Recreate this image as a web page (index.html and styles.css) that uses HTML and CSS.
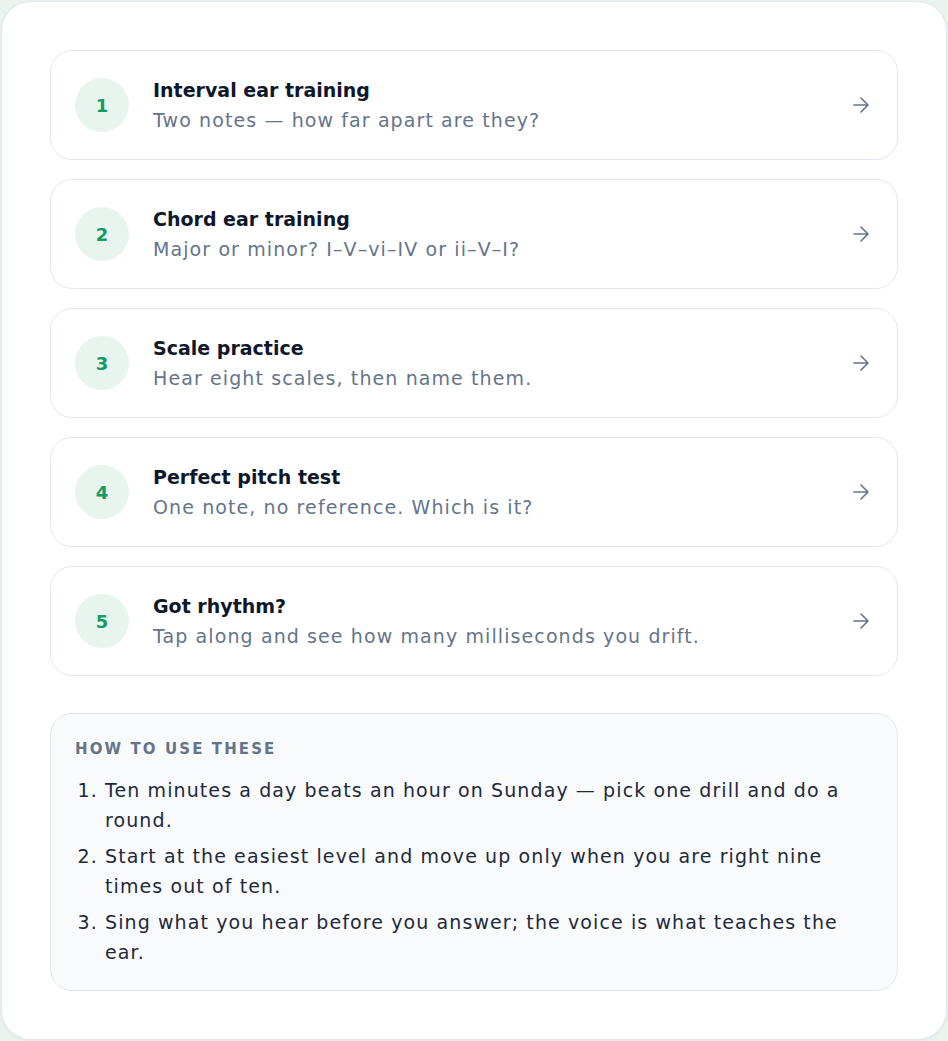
FILE: index.html
```html
<!DOCTYPE html>
<html lang="en">
<head>
  <meta charset="UTF-8">
  <meta name="viewport" content="width=device-width, initial-scale=1.0">
  <title>Ear Training Drills</title>
  <link rel="stylesheet" href="styles.css">
</head>
<body>
  <div class="panel">
    <div class="drills">
      <a class="drill" href="#">
        <span class="num">1</span>
        <span class="info">
          <span class="title">Interval ear training</span>
          <span class="desc">Two notes — how far apart are they?</span>
        </span>
        <svg class="arrow" viewBox="0 0 24 24"><path d="M5 12h14M12 5l7 7-7 7"/></svg>
      </a>
      <a class="drill" href="#">
        <span class="num">2</span>
        <span class="info">
          <span class="title">Chord ear training</span>
          <span class="desc">Major or minor? I–V–vi–IV or ii–V–I?</span>
        </span>
        <svg class="arrow" viewBox="0 0 24 24"><path d="M5 12h14M12 5l7 7-7 7"/></svg>
      </a>
      <a class="drill" href="#">
        <span class="num">3</span>
        <span class="info">
          <span class="title">Scale practice</span>
          <span class="desc">Hear eight scales, then name them.</span>
        </span>
        <svg class="arrow" viewBox="0 0 24 24"><path d="M5 12h14M12 5l7 7-7 7"/></svg>
      </a>
      <a class="drill" href="#">
        <span class="num">4</span>
        <span class="info">
          <span class="title">Perfect pitch test</span>
          <span class="desc">One note, no reference. Which is it?</span>
        </span>
        <svg class="arrow" viewBox="0 0 24 24"><path d="M5 12h14M12 5l7 7-7 7"/></svg>
      </a>
      <a class="drill" href="#">
        <span class="num">5</span>
        <span class="info">
          <span class="title">Got rhythm?</span>
          <span class="desc">Tap along and see how many milliseconds you drift.</span>
        </span>
        <svg class="arrow" viewBox="0 0 24 24"><path d="M5 12h14M12 5l7 7-7 7"/></svg>
      </a>
    </div>

    <div class="tips">
      <h2>How to use these</h2>
      <ol>
        <li>Ten minutes a day beats an hour on Sunday — pick one drill and do a round.</li>
        <li>Start at the easiest level and move up only when you are right nine times out of ten.</li>
        <li>Sing what you hear before you answer; the voice is what teaches the ear.</li>
      </ol>
    </div>
  </div>
</body>
</html>
```

FILE: styles.css
```css
body {
  margin: 0;
  padding: 1px;
  background: #eaf4ef;
  font-family: "DejaVu Sans", "Noto Sans", sans-serif;
  color: #0f172a;
}
.panel {
  background: #fff;
  border: 1px solid #e2e8f0;
  border-radius: 30px;
  padding: 48px;
  box-shadow: 0 1px 3px rgba(15, 23, 42, 0.05);
}
.drills {
  display: flex;
  flex-direction: column;
  gap: 19px;
}
.drill {
  display: flex;
  align-items: center;
  gap: 24px;
  padding: 24px;
  border: 1px solid #e2e8f0;
  border-radius: 22px;
  background: #fff;
  text-decoration: none;
  color: inherit;
}
.num {
  flex: none;
  width: 54px;
  height: 54px;
  border-radius: 50%;
  background: #e7f5ee;
  color: #149a63;
  font-weight: 700;
  font-size: 18px;
  display: flex;
  align-items: center;
  justify-content: center;
}
.info {
  flex: 1;
  display: flex;
  flex-direction: column;
}
.title {
  font-size: 19px;
  font-weight: 700;
  line-height: 30px;
}
.desc {
  font-size: 19px;
  line-height: 30px;
  color: #64748b;
  letter-spacing: 1.1px;
}
.arrow {
  flex: none;
  width: 24px;
  height: 24px;
  fill: none;
  stroke: #64748b;
  stroke-width: 1.6;
  stroke-linecap: round;
  stroke-linejoin: round;
}
.tips {
  margin-top: 37px;
  background: #f8fafc;
  border: 1px solid #e2e8f0;
  border-radius: 22px;
  padding: 24px 24px 23px;
}
.tips h2 {
  margin: 0 0 15px;
  font-size: 15px;
  line-height: 22px;
  font-weight: 600;
  text-transform: uppercase;
  letter-spacing: 2.1px;
  color: #64748b;
}
.tips ol {
  margin: 0;
  padding-left: 30px;
  display: flex;
  flex-direction: column;
  gap: 6px;
}
.tips li {
  font-size: 19px;
  line-height: 30px;
  color: #1e293b;
  letter-spacing: 1.1px;
}
```
